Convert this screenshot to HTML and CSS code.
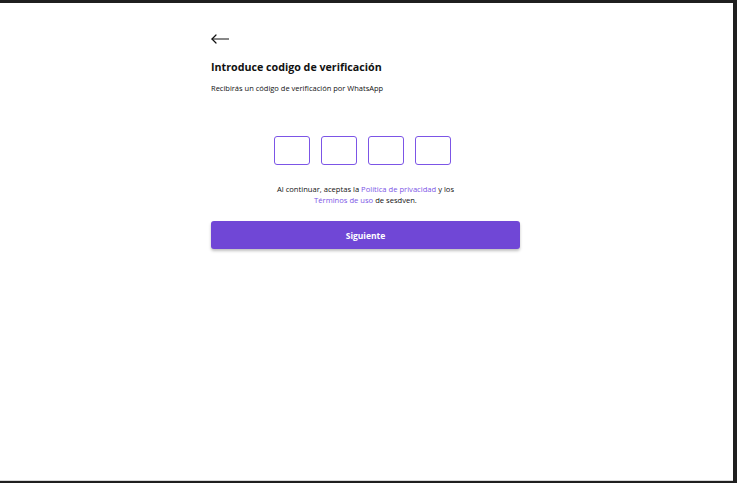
FILE: index.html
```html
<!DOCTYPE html>
<html lang="es">
<head>
<meta charset="utf-8">
<title>Verificación</title>
<link rel="stylesheet" href="styles.css">
</head>
<body>
<div class="frame">
  <main class="screen">
    <div class="content">
      <button class="back" aria-label="Volver">
        <svg width="18" height="10" viewBox="0 0 18 10" fill="none" stroke="#111" stroke-width="1.2" stroke-linecap="round" stroke-linejoin="round">
          <path d="M17.5 5H1"/>
          <path d="M5 1L1 5L5 9"/>
        </svg>
      </button>
      <h1 class="title">Introduce codigo de verificación</h1>
      <p class="subtitle">Recibirás un código de verificación por WhatsApp</p>
      <div class="code">
        <div class="digit"></div>
        <div class="digit"></div>
        <div class="digit"></div>
        <div class="digit"></div>
      </div>
      <p class="terms">Al continuar, aceptas la <a href="#">Política de privacidad</a> y los<br><a href="#">Términos de uso</a> de sesdven.</p>
      <button class="next">Siguiente</button>
    </div>
  </main>
</div>
</body>
</html>
```

FILE: styles.css
```css
* { box-sizing: border-box; }
html, body { margin: 0; padding: 0; height: 100%; }
body {
  background: #1f1f1f;
  font-family: "Open Sans", "Liberation Sans", sans-serif;
  color: #111;
}
.frame {
  height: 100%;
  padding: 3px 4px 2px 0;
}
.screen {
  height: 100%;
  background: #fff;
  border-bottom: 1px solid #d8d8d8;
  display: flex;
  justify-content: center;
  padding-right: 2px;
}
.content {
  width: 309px;
  padding-top: 31px;
  display: flex;
  flex-direction: column;
}
.back {
  align-self: flex-start;
  background: none;
  border: 0;
  padding: 0;
  margin: 0;
  height: 10px;
  display: flex;
  cursor: pointer;
}
.title {
  margin: 15px 0 0;
  font-size: 10.7px;
  font-weight: 700;
  line-height: 16px;
  letter-spacing: 0;
}
.subtitle {
  margin: 8px 0 0;
  font-size: 7.5px;
  line-height: 10px;
}
.code {
  display: flex;
  gap: 11px;
  margin: 43px 0 0 63px;
}
.digit {
  width: 36px;
  height: 29px;
  border: 1.5px solid #7c55e6;
  border-radius: 3px;
}
.terms {
  margin: 19px 0 0;
  text-align: center;
  font-size: 7.6px;
  line-height: 11px;
}
.terms a {
  color: #7c55e6;
  text-decoration: none;
}
.next {
  margin-top: 15px;
  height: 28px;
  border: 0;
  border-radius: 3px;
  background: #7047d6;
  color: #fff;
  font-family: inherit;
  font-size: 8.5px;
  font-weight: 700;
  box-shadow: 0 2px 3px rgba(0,0,0,0.25);
  cursor: pointer;
}
```
